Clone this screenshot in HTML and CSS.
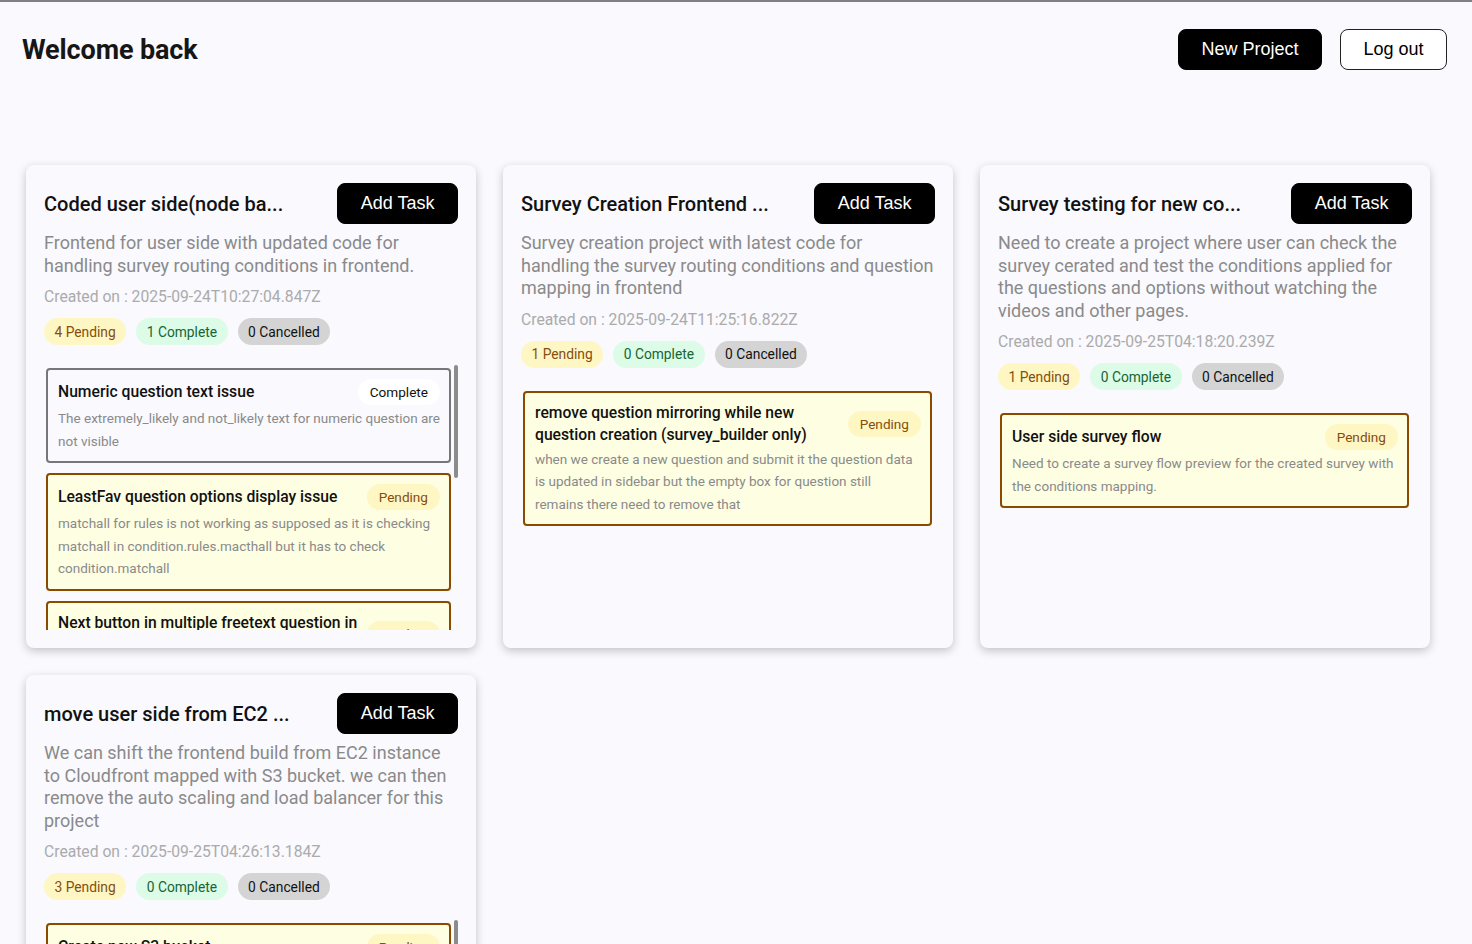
FILE: index.html
```html
<!DOCTYPE html>
<html lang="en">
<head>
<meta charset="utf-8">
<title>Projects</title>
<link rel="stylesheet" href="styles.css">
</head>
<body>
<div class="topline"></div>
<header class="header">
  <h1 class="welcome">Welcome back</h1>
  <div class="actions">
    <button class="btn btn-dark">New Project</button>
    <button class="btn btn-light">Log out</button>
  </div>
</header>

<main class="grid">
  <section class="card">
    <div class="card-head">
      <h2 class="card-title">Coded user side(node ba...</h2>
      <button class="btn btn-dark">Add Task</button>
    </div>
    <p class="card-desc">Frontend for user side with updated code for handling survey routing conditions in frontend.</p>
    <p class="created">Created on : 2025-09-24T10:27:04.847Z</p>
    <div class="stats">
      <span class="pill pill-pending">4 Pending</span>
      <span class="pill pill-complete">1 Complete</span>
      <span class="pill pill-cancelled">0 Cancelled</span>
    </div>
    <div class="tasks-wrap">
      <div class="tasks scroll">
        <div class="task task-complete">
          <div class="task-head">
            <h3 class="task-title">Numeric question text issue</h3>
            <span class="tag tag-complete">Complete</span>
          </div>
          <p class="task-desc">The extremely_likely and not_likely text for numeric question are not visible</p>
        </div>
        <div class="task task-pending">
          <div class="task-head">
            <h3 class="task-title">LeastFav question options display issue</h3>
            <span class="tag tag-pending">Pending</span>
          </div>
          <p class="task-desc">matchall for rules is not working as supposed as it is checking matchall in condition.rules.macthall but it has to check condition.matchall</p>
        </div>
        <div class="task task-pending">
          <div class="task-head">
            <h3 class="task-title">Next button in multiple freetext question in survey preview</h3>
            <span class="tag tag-pending">Pending</span>
          </div>
          <p class="task-desc">The next button is not enabled after all the freetext inputs are filled in the preview</p>
        </div>
        <div class="task task-pending">
          <div class="task-head">
            <h3 class="task-title">Routing condition for skipped questions</h3>
            <span class="tag tag-pending">Pending</span>
          </div>
          <p class="task-desc">Skipped questions should not be evaluated while checking the routing conditions</p>
        </div>
        <div class="task task-pending">
          <div class="task-head">
            <h3 class="task-title">Progress bar update</h3>
            <span class="tag tag-pending">Pending</span>
          </div>
          <p class="task-desc">Progress bar is not updated when the user goes back to the previous question</p>
        </div>
      </div>
      <div class="thumb thumb-1"></div>
    </div>
  </section>

  <section class="card">
    <div class="card-head">
      <h2 class="card-title">Survey Creation Frontend ...</h2>
      <button class="btn btn-dark">Add Task</button>
    </div>
    <p class="card-desc">Survey creation project with latest code for handling the survey routing conditions and question mapping in frontend</p>
    <p class="created">Created on : 2025-09-24T11:25:16.822Z</p>
    <div class="stats">
      <span class="pill pill-pending">1 Pending</span>
      <span class="pill pill-complete">0 Complete</span>
      <span class="pill pill-cancelled">0 Cancelled</span>
    </div>
    <div class="tasks">
      <div class="task task-pending">
        <div class="task-head">
          <h3 class="task-title">remove question mirroring while new question creation (survey_builder only)</h3>
          <span class="tag tag-pending">Pending</span>
        </div>
        <p class="task-desc">when we create a new question and submit it the question data is updated in sidebar but the empty box for question still remains there need to remove that</p>
      </div>
    </div>
  </section>

  <section class="card">
    <div class="card-head">
      <h2 class="card-title">Survey testing for new co...</h2>
      <button class="btn btn-dark">Add Task</button>
    </div>
    <p class="card-desc">Need to create a project where user can check the survey cerated and test the conditions applied for the questions and options without watching the videos and other pages.</p>
    <p class="created">Created on : 2025-09-25T04:18:20.239Z</p>
    <div class="stats">
      <span class="pill pill-pending">1 Pending</span>
      <span class="pill pill-complete">0 Complete</span>
      <span class="pill pill-cancelled">0 Cancelled</span>
    </div>
    <div class="tasks">
      <div class="task task-pending">
        <div class="task-head">
          <h3 class="task-title">User side survey flow</h3>
          <span class="tag tag-pending">Pending</span>
        </div>
        <p class="task-desc">Need to create a survey flow preview for the created survey with the conditions mapping.</p>
      </div>
    </div>
  </section>

  <section class="card">
    <div class="card-head">
      <h2 class="card-title">move user side from EC2 ...</h2>
      <button class="btn btn-dark">Add Task</button>
    </div>
    <p class="card-desc">We can shift the frontend build from EC2 instance to Cloudfront mapped with S3 bucket. we can then remove the auto scaling and load balancer for this project</p>
    <p class="created">Created on : 2025-09-25T04:26:13.184Z</p>
    <div class="stats">
      <span class="pill pill-pending">3 Pending</span>
      <span class="pill pill-complete">0 Complete</span>
      <span class="pill pill-cancelled">0 Cancelled</span>
    </div>
    <div class="tasks-wrap">
      <div class="tasks scroll">
        <div class="task task-pending">
          <div class="task-head">
            <h3 class="task-title">Create new S3 bucket</h3>
            <span class="tag tag-pending">Pending</span>
          </div>
          <p class="task-desc">Create a new S3 bucket for the frontend build and enable static website hosting for it</p>
        </div>
        <div class="task task-pending">
          <div class="task-head">
            <h3 class="task-title">Map Cloudfront distribution with S3 bucket</h3>
            <span class="tag tag-pending">Pending</span>
          </div>
          <p class="task-desc">Create the Cloudfront distribution and map it with the S3 bucket along with the domain</p>
        </div>
        <div class="task task-pending">
          <div class="task-head">
            <h3 class="task-title">Remove auto scaling and load balancer</h3>
            <span class="tag tag-pending">Pending</span>
          </div>
          <p class="task-desc">Remove the auto scaling group and load balancer once the migration is complete</p>
        </div>
      </div>
      <div class="thumb thumb-4"></div>
    </div>
  </section>
</main>
</body>
</html>
```

FILE: styles.css
```css
* { box-sizing: border-box; }

html, body {
  margin: 0;
  padding: 0;
  background: #f9f9fe;
  font-family: Roboto, "Noto Sans", "Liberation Sans", sans-serif;
  color: #111;
}

.topline {
  height: 2px;
  background: #808080;
}

.header {
  display: flex;
  justify-content: space-between;
  align-items: center;
  padding: 27px 25px 0 22px;
}

.welcome {
  margin: 0;
  font-size: 27px;
  font-weight: 700;
  color: #161616;
  letter-spacing: -0.12px;
}

.actions {
  display: flex;
  gap: 18px;
}

.btn {
  font-family: "Liberation Sans", Arial, sans-serif;
  font-size: 18px;
  height: 41px;
  padding: 0 22.5px;
  border-radius: 8px;
  cursor: pointer;
  white-space: nowrap;
}

.btn-dark {
  background: #000;
  color: #fff;
  border: 1px solid #000;
}

.btn-light {
  background: #fff;
  color: #000;
  border: 1px solid #222;
}

.grid {
  display: grid;
  grid-template-columns: repeat(3, 450px);
  gap: 27px;
  padding: 0 0 40px 26px;
  margin-top: 95px;
}

.card {
  background: #f9f9fe;
  border-radius: 8px;
  box-shadow: 0 3px 10px rgba(0, 0, 0, 0.22);
  padding: 18px;
  display: flex;
  flex-direction: column;
  min-height: 483px;
}

.card-head {
  display: flex;
  justify-content: space-between;
  align-items: center;
}

.card-title {
  margin: 0;
  font-size: 20px;
  font-weight: 500;
  color: #111;
  white-space: nowrap;
}

.card-desc {
  margin: 8px 0 0;
  font-size: 18px;
  line-height: 22.5px;
  color: #8a8a8a;
}

.created {
  margin: 8px 0 0;
  font-size: 15.7px;
  line-height: 24px;
  color: #ababab;
}

.stats {
  display: flex;
  gap: 10px;
  margin-top: 9px;
}

.pill {
  display: inline-flex;
  align-items: center;
  height: 27px;
  padding: 0 10.5px;
  border-radius: 14px;
  font-size: 13.8px;
}

.pill-pending { background: #fef7c3; color: #854d0e; }
.pill-complete { background: #dcfce7; color: #166534; }
.pill-cancelled { background: #d4d4d4; color: #111; }

.tasks-wrap {
  position: relative;
  margin-top: 20px;
}

.tasks {
  margin-top: 20px;
  padding: 3px 3px 3px 2px;
  display: flex;
  flex-direction: column;
  gap: 10px;
}

.tasks-wrap .tasks {
  margin-top: 0;
  padding-right: 7px;
}

.scroll {
  height: 265px;
  overflow-y: auto;
  scrollbar-width: none;
}

.scroll::-webkit-scrollbar { display: none; }

.thumb {
  position: absolute;
  top: 0;
  right: 0;
  width: 4px;
  border-radius: 2px;
  background: #8c8c8c;
}

.thumb-1 { height: 113px; }
.thumb-4 { height: 150px; }

.task {
  flex: none;
  border: 2px solid;
  border-radius: 4px;
  padding: 9px 9px 9px 10px;
}

.task-complete { border-color: #777; background: transparent; }
.task-pending { border-color: #8a4a00; background: #fefee3; }

.task-head {
  display: flex;
  justify-content: space-between;
  align-items: center;
  gap: 8px;
}

.task-title {
  margin: 0;
  font-size: 15.7px;
  font-weight: 500;
  line-height: 22px;
  color: #111;
}

.tag {
  flex: none;
  display: inline-flex;
  align-items: center;
  height: 26px;
  padding: 0 12px;
  border-radius: 13px;
  font-size: 13.6px;
}

.tag-complete { background: #fff; color: #111; }
.tag-pending { background: #fef7c3; color: #854d0e; }

.task-desc {
  margin: 2px 0 0;
  font-size: 13.5px;
  line-height: 22.5px;
  color: #8a8a8a;
}
```
